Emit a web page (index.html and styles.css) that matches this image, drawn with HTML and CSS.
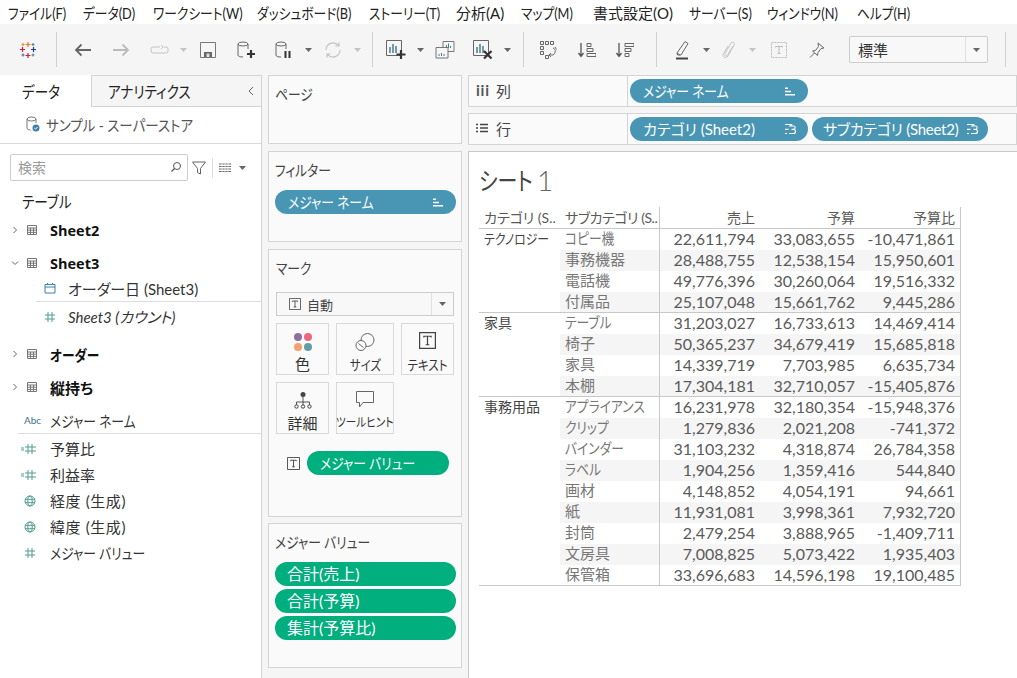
FILE: index.html
```html
<!DOCTYPE html>
<html lang="ja">
<head>
    <title>Tableau</title>
    <link rel="stylesheet" href="styles.css">
</head>
<body>
    <svg class="defs" width="0" height="0">
        <symbol id="tbl" viewBox="0 0 12 12"><path d="M1.500 1.500h9v9h-9zM1.500 4h9M1.500 6.200h9M1.500 8.400h9M4.500 4v6.500M7.500 4v6.500" fill="none" stroke="#777" stroke-width="1"/></symbol>
        <symbol id="hash" viewBox="0 0 12 12"><path d="M4 1v10M8 1v10M1 4h10M1 8h10" fill="none" stroke="#4f9e8f" stroke-width="1"/></symbol>
        <symbol id="calc" viewBox="0 0 16 12"><path d="M7 1v10M11 1v10M4 4h11M4 8h11" fill="none" stroke="#4f9e8f" stroke-width="1"/><path d="M0 5h3M0 7h3" stroke="#4f9e8f" stroke-width="1"/></symbol>
        <symbol id="globe" viewBox="0 0 12 12"><g fill="none" stroke="#4f9e8f" stroke-width="1"><circle cx="6" cy="6" r="5"/><ellipse cx="6" cy="6" rx="2.200" ry="5"/><path d="M1 4.300h10M1 7.700h10"/></g></symbol>
        <symbol id="chev" viewBox="0 0 8 8"><path d="M2.500 1l3 3-3 3" fill="none" stroke="#666" stroke-width="1"/></symbol>
        <symbol id="caret" viewBox="0 0 7 4"><path d="M0 0h7L3.500 4z"/></symbol>
        <symbol id="sort" viewBox="0 0 12 10"><path d="M1 1h3v1.500H1zM1 4.200h6v1.500H1zM1 7.500h10V9H1z" fill="#fff"/></symbol>
        <symbol id="hier" viewBox="0 0 14 12"><path d="M1 1.500h6.500l-1.500 1.500H9.500a1.700 1.700 0 0 1 0 3.400H7.500M5 10.500h4.500a2 2 0 0 0 0-4M1 6.400h3.500M1 10.500h2" fill="none" stroke="#fff" stroke-width="1.100"/></symbol>
        <symbol id="ttype" viewBox="0 0 14 14"><path d="M.5.500h13v13H.500z" fill="none" stroke="#444"/><path d="M4 4.500V3.500h6v1M7 3.500v7M5.500 10.500h3" fill="none" stroke="#444"/></symbol>
    </svg>

    <div class="menu-bar">
        <span class="menu-item cond">ファイル(F)</span>
        <span class="menu-item cond">データ(D)</span>
        <span class="menu-item cond">ワークシート(W)</span>
        <span class="menu-item cond">ダッシュボード(B)</span>
        <span class="menu-item cond">ストーリー(T)</span>
        <span class="menu-item">分析(A)</span>
        <span class="menu-item cond">マップ(M)</span>
        <span class="menu-item">書式設定(O)</span>
        <span class="menu-item cond">サーバー(S)</span>
        <span class="menu-item cond">ウィンドウ(N)</span>
        <span class="menu-item cond">ヘルプ(H)</span>
    </div>

    <div class="toolbar">
        <div class="tool-group group-logo">
            <svg width="18" height="18" viewBox="0 0 18 18" fill="none" stroke-width="1.200">
                <path d="M9 1v5M6.500 3.500h5" stroke="#e8762d"/>
                <path d="M9 12v5M6.500 14.500h5" stroke="#c72037"/>
                <path d="M3.500 6v5M1 8.500h5" stroke="#c72037"/>
                <path d="M14.500 6v5M12 8.500h5" stroke="#1f447a"/>
                <path d="M4 2v3M2.500 3.500h3" stroke="#eb912b"/>
                <path d="M14 2v3M12.500 3.500h3" stroke="#5b879b"/>
                <path d="M4 12.500v3M2.500 14h3" stroke="#5c6692"/>
                <path d="M14 12.500v3M12.500 14h3" stroke="#59879b"/>
            </svg>
        </div>
        <div class="tool-group group-history">
            <div class="tool"><svg width="18" height="14" viewBox="0 0 18 14"><path d="M17 7H2M7.500 1.500L2 7l5.500 5.500" fill="none" stroke="#666" stroke-width="1.800"/></svg></div>
            <div class="tool"><svg width="18" height="14" viewBox="0 0 18 14"><path d="M1 7h15M10.500 1.500L16 7l-5.500 5.500" fill="none" stroke="#bbb" stroke-width="1.800"/></svg></div>
            <div class="tool"><svg width="19" height="12" viewBox="0 0 19 12"><path d="M10 3H3a2 2 0 0 0-2 2v2a2 2 0 0 0 2 2h13a2 2 0 0 0 2-2V5a2 2 0 0 0-2-2h-2M11 1l2 2-2 2" fill="none" stroke="#c4c4c4"/></svg></div>
            <svg class="caret off"><use href="#caret"/></svg>
            <div class="tool"><svg width="16" height="16" viewBox="0 0 16 16"><path d="M.5.500h15v15H.500z" fill="none" stroke="#777"/><path d="M4 10h8v5H4z" fill="#666"/><path d="M6.500 11.500h3V15h-3z" fill="#ddd"/></svg></div>
            <div class="tool"><svg width="20" height="20" viewBox="0 0 20 20"><g fill="none" stroke="#666"><ellipse cx="7" cy="4" rx="5" ry="2"/><path d="M2 4v11c0 1.500 2 2 5 2M12 4v5"/></g><path d="M15 10v8M11 14h8" stroke="#333" stroke-width="2.200"/></svg></div>
            <div class="tool"><svg width="20" height="20" viewBox="0 0 20 20"><g fill="none" stroke="#666"><ellipse cx="7" cy="4" rx="5" ry="2"/><path d="M2 4v11c0 1.500 2 2 5 2M12 4v5"/></g><path d="M11.500 11v7M15.500 11v7" stroke="#333" stroke-width="2"/></svg></div>
            <svg class="caret"><use href="#caret"/></svg>
            <div class="tool"><svg width="18" height="18" viewBox="0 0 18 18"><path d="M2 9a7 7 0 0 1 12.500-4.300M16 9a7 7 0 0 1-12.500 4.300M15 1.500v3.500h-3.500M3 16.500V13h3.500" fill="none" stroke="#c4c4c4" stroke-width="1.200"/></svg></div>
            <svg class="caret off"><use href="#caret"/></svg>
        </div>
        <div class="tool-group group-sheet">
            <div class="tool"><svg width="20" height="20" viewBox="0 0 20 20"><path d="M.5.500h15v15H.500z" fill="none" stroke="#666"/><path d="M4 7v6M7 4v9M10 6v7" stroke="#4a7c8c" stroke-width="1.500"/><path d="M15 10v9M10.500 14.500h9" stroke="#333" stroke-width="2.200"/></svg></div>
            <svg class="caret"><use href="#caret"/></svg>
            <div class="tool"><svg width="20" height="18" viewBox="0 0 20 18"><path d="M8 6.500V.5h11v10h-6M1 6.500h12v10.500H1z" fill="#f5f5f5" stroke="#777"/><path d="M11.500 7V4M13.500 7V2.500M15.500 7V5M4 15v-2M6.500 15v-3M9 15v-2" stroke="#4a7c8c"/></svg></div>
            <div class="tool"><svg width="20" height="20" viewBox="0 0 20 20"><path d="M.5.500h15v15H.500z" fill="none" stroke="#666"/><path d="M4 7v6M7 4v9M10 6v7" stroke="#4a7c8c" stroke-width="1.500"/><path d="M11 11l7.500 7.500M18.500 11L11 18.500" stroke="#333" stroke-width="2.200"/></svg></div>
            <svg class="caret"><use href="#caret"/></svg>
        </div>
        <div class="tool-group group-sort">
            <div class="tool"><svg width="18" height="18" viewBox="0 0 18 18"><g fill="none" stroke="#666"><path d="M.5.500h3v3h-3zM5.500.500h3v3h-3zM10.500.500h3v3h-3zM.5 5.500h3v3h-3zM.5 10.500h3v3h-3zM5.500 14.500h3v3h-3z"/><path d="M13 7c3 1 3 5 0 7H9M15 6l1.500 2.500M11 12l-2 2 2 2"/></g></svg></div>
            <div class="tool"><svg width="18" height="16" viewBox="0 0 18 16"><path d="M3 1v13M.5 11L3 14.500 5.500 11" fill="none" stroke="#555" stroke-width="1.300"/><path d="M9 1.500h4v3H9zM9 6.500h6v3H9zM9 11.500h9v3H9z" fill="none" stroke="#666"/></svg></div>
            <div class="tool"><svg width="18" height="16" viewBox="0 0 18 16"><path d="M3 1v13M.5 11L3 14.500 5.500 11" fill="none" stroke="#555" stroke-width="1.300"/><path d="M9 1.500h9v3H9zM9 6.500h6v3H9zM9 11.500h4v3H9z" fill="none" stroke="#666"/></svg></div>
        </div>
        <div class="tool-group group-format">
            <div class="tool"><svg width="14" height="20" viewBox="0 0 14 20"><path d="M1 13L9 1.500l3 2L5 15H1.500z" fill="none" stroke="#666"/><path d="M1 13l3 2" stroke="#666"/><path d="M0 18.500h12" stroke="#444" stroke-width="2"/></svg></div>
            <svg class="caret narrow"><use href="#caret"/></svg>
            <div class="tool"><svg width="14" height="20" viewBox="0 0 14 20"><path d="M11 6l-5.500 9c-1 1.700-3.500.5-2.500-1.500L9 3c1.200-2 4.500-.5 3 2L6 16c-2 3-6.500 1-4.500-2.500L6 6" fill="none" stroke="#c4c4c4"/></svg></div>
            <svg class="caret narrow off"><use href="#caret"/></svg>
            <div class="tool tool-label"><svg width="16" height="16" viewBox="0 0 16 16"><path d="M.5.500h15v15H.500z" fill="none" stroke="#bbb" stroke-dasharray="2 1"/><path d="M4.500 5.500v-1h7v1M8 4.500v7M6.500 11.500h3" fill="none" stroke="#bbb"/></svg></div>
            <div class="tool"><svg width="16" height="16" viewBox="0 0 16 16"><path d="M9 1l6 5-3 .5-3 4-.5 3L3.500 9l3-.5 3-4zM5.500 11L1 15.500" fill="none" stroke="#666"/></svg></div>
            <div class="view-select">
                <span class="view-select-text">標準</span>
                <span class="view-select-btn"><svg class="caret"><use href="#caret"/></svg></span>
            </div>
        </div>
        <div class="tool-group group-end"></div>
    </div>

    <div class="main">
        <div class="data-pane">
            <div class="tabs">
                <div class="tab tab-active"><span class="cond">データ</span></div>
                <div class="tab tab-other"><span class="cond">アナリティクス</span><svg class="tab-collapse" width="8" height="10" viewBox="0 0 8 10"><path d="M6 1L2 5l4 4" fill="none" stroke="#666"/></svg></div>
            </div>
            <div class="source">
                <svg width="14" height="16" viewBox="0 0 14 16"><g fill="none" stroke="#777"><ellipse cx="5.500" cy="3" rx="4.500" ry="2"/><path d="M1 3v9c0 1.300 1.500 2 3.500 2M10 3v4"/></g><circle cx="10" cy="12" r="3.500" fill="#3f7fa8"/><path d="M8.300 12l1.200 1.200 2-2.200" fill="none" stroke="#fff"/></svg>
                <span class="cond cond-wide">サンプル - スーパーストア</span>
            </div>
            <div class="search-row">
                <div class="search-box">
                    <span class="search-text">検索</span>
                    <svg width="12" height="12" viewBox="0 0 12 12"><circle cx="7" cy="5" r="3.500" fill="none" stroke="#555"/><path d="M4.500 7.500L1.500 10.500" stroke="#555" stroke-width="1.200"/></svg>
                </div>
                <svg class="search-filter" width="14" height="14" viewBox="0 0 14 14"><path d="M.5 1h13L8.500 7.500V13l-3-1.500v-4z" fill="none" stroke="#666"/></svg>
                <span class="search-divider"></span>
                <svg class="search-grid" width="12" height="10" viewBox="0 0 12 10"><path d="M0 1h12M0 3.500h12M0 6h12M0 8.500h12" stroke="#666"/><path d="M3 0v10M6 0v10M9 0v10" stroke="#f8f8f8" stroke-width=".8"/></svg>
                <svg class="caret"><use href="#caret"/></svg>
            </div>
            <div class="tables-title"><span class="cond">テーブル</span></div>
            <div class="field table-row">
                <svg class="chev"><use href="#chev"/></svg>
                <svg class="field-icon"><use href="#tbl"/></svg>
                <span class="sheet-name">Sheet2</span>
            </div>
            <div class="field table-row">
                <svg class="chev chev-open"><use href="#chev"/></svg>
                <svg class="field-icon"><use href="#tbl"/></svg>
                <span class="sheet-name">Sheet3</span>
            </div>
            <div class="field sub-field sub-date">
                <svg class="field-icon" viewBox="0 0 12 12"><path d="M1 2.500h10v8.500H1zM1 5h10M3.500 1v2M8.500 1v2" fill="none" stroke="#3f7fa8"/></svg>
                <span>オーダー日 (Sheet3)</span>
            </div>
            <div class="field sub-field sub-count">
                <svg class="field-icon"><use href="#hash"/></svg>
                <em>Sheet3 (カウント)</em>
            </div>
            <div class="field table-row">
                <svg class="chev"><use href="#chev"/></svg>
                <svg class="field-icon"><use href="#tbl"/></svg>
                <span class="cond">オーダー</span>
            </div>
            <div class="field table-row table-last">
                <svg class="chev"><use href="#chev"/></svg>
                <svg class="field-icon"><use href="#tbl"/></svg>
                <span>縦持ち</span>
            </div>
            <div class="field measure-names">
                <span class="abc">Abc</span>
                <span class="cond">メジャー ネーム</span>
            </div>
            <div class="field">
                <svg class="field-icon calc"><use href="#calc"/></svg>
                <span>予算比</span>
            </div>
            <div class="field">
                <svg class="field-icon calc"><use href="#calc"/></svg>
                <span>利益率</span>
            </div>
            <div class="field">
                <svg class="field-icon"><use href="#globe"/></svg>
                <span class="spaced">経度 (生成)</span>
            </div>
            <div class="field">
                <svg class="field-icon"><use href="#globe"/></svg>
                <span class="spaced">緯度 (生成)</span>
            </div>
            <div class="field">
                <svg class="field-icon"><use href="#hash"/></svg>
                <span class="cond">メジャー バリュー</span>
            </div>
        </div>

        <div class="cards">
            <div class="card card-pages">
                <div class="card-title"><span class="cond">ページ</span></div>
            </div>
            <div class="card card-filters">
                <div class="card-title"><span class="cond">フィルター</span></div>
                <div class="pill pill-blue"><span class="cond">メジャー ネーム</span><svg class="pill-icon"><use href="#sort"/></svg></div>
            </div>
            <div class="card card-marks">
                <div class="card-title"><span class="cond">マーク</span></div>
                <div class="marks-select">
                    <svg width="12" height="12"><use href="#ttype"/></svg>
                    <span class="marks-select-text">自動</span>
                    <span class="marks-select-btn"><svg class="caret"><use href="#caret"/></svg></span>
                </div>
                <div class="marks-grid">
                    <div class="mark-btn">
                        <svg class="mark-icon" width="20" height="20" viewBox="0 0 20 20"><circle cx="5" cy="5" r="4" fill="#8f6f9f"/><circle cx="15" cy="5" r="4" fill="#e8687f"/><circle cx="5" cy="15" r="4" fill="#f2a272"/><circle cx="15" cy="15" r="4" fill="#5f9ea6"/></svg>
                        <span>色</span>
                    </div>
                    <div class="mark-btn">
                        <svg class="mark-icon" width="20" height="20" viewBox="0 0 20 20"><circle cx="12.500" cy="8" r="6.500" fill="none" stroke="#666"/><circle cx="6" cy="13.500" r="5" fill="#fafafa" stroke="#666"/><path d="M3.500 11.500l5 4" stroke="#666"/></svg>
                        <span class="cond">サイズ</span>
                    </div>
                    <div class="mark-btn">
                        <svg class="mark-icon" width="17" height="17"><use href="#ttype"/></svg>
                        <span class="cond">テキスト</span>
                    </div>
                    <div class="mark-btn">
                        <svg class="mark-icon" width="18" height="18" viewBox="0 0 18 18"><circle cx="9" cy="3.500" r="2.500" fill="#444"/><path d="M9 6v5M2.500 14v-3h13v3M9 11v3" fill="none" stroke="#555"/><circle cx="2.500" cy="15.500" r="1.700" fill="none" stroke="#444"/><circle cx="9" cy="15.500" r="1.700" fill="none" stroke="#444"/><circle cx="15.500" cy="15.500" r="1.700" fill="none" stroke="#444"/></svg>
                        <span>詳細</span>
                    </div>
                    <div class="mark-btn">
                        <svg class="mark-icon" width="18" height="17" viewBox="0 0 18 17"><path d="M.5.500h17v11H7l-3.500 4.500v-4.500h-3z" fill="none" stroke="#666"/></svg>
                        <span class="cond mark-small">ツールヒント</span>
                    </div>
                </div>
                <div class="mark-pill-row">
                    <svg width="13" height="13"><use href="#ttype"/></svg>
                    <div class="pill pill-green"><span class="cond">メジャー バリュー</span></div>
                </div>
            </div>
            <div class="card card-values">
                <div class="card-title"><span class="cond">メジャー バリュー</span></div>
                <div class="pill pill-green pill-calc">合計(売上)</div>
                <div class="pill pill-green pill-calc">合計(予算)</div>
                <div class="pill pill-green pill-calc">集計(予算比)</div>
            </div>
        </div>

        <div class="work">
            <div class="shelf">
                <div class="shelf-label"><span class="shelf-glyph">iii</span>列</div>
                <div class="shelf-pills">
                    <div class="pill pill-blue pill-shelf"><span class="cond">メジャー ネーム</span><svg class="pill-icon"><use href="#sort"/></svg></div>
                </div>
            </div>
            <div class="shelf shelf-rows">
                <div class="shelf-label">
                    <span class="shelf-glyph"><svg width="12" height="10" viewBox="0 0 12 10"><path d="M0 1.500h2M4 1.500h8M0 5h2M4 5h8M0 8.500h2M4 8.500h8" stroke="#444" stroke-width="1.300"/></svg></span>行
                </div>
                <div class="shelf-pills">
                    <div class="pill pill-blue pill-shelf pill-hier">カテゴリ (Sheet2)<svg class="pill-icon icon-hier"><use href="#hier"/></svg></div>
                    <div class="pill pill-blue pill-shelf pill-sub">サブカテゴリ (Sheet2)<svg class="pill-icon icon-hier"><use href="#hier"/></svg></div>
                </div>
            </div>
            <div class="view">
                <h1 class="sheet-title"><span class="cond cond-title">シート</span><span class="title-num">1</span></h1>
                <table class="crosstab">
                    <colgroup>
                        <col class="col-cat"><col class="col-sub"><col class="col-num"><col class="col-num"><col class="col-num">
                    </colgroup>
                    <thead>
                        <tr><th>カテゴリ (S..</th><th class="th-sub">サブカテゴリ (S..</th><th class="num">売上</th><th class="num">予算</th><th class="num">予算比</th></tr>
                    </thead>
                    <tbody class="group">
                        <tr><td class="cat" rowspan="4"><span class="cond">テクノロジー</span></td><td class="sub"><span class="cond">コピー機</span></td><td class="num">22,611,794</td><td class="num">33,083,655</td><td class="num">-10,471,861</td></tr>
                        <tr class="alt"><td class="sub">事務機器</td><td class="num">28,488,755</td><td class="num">12,538,154</td><td class="num">15,950,601</td></tr>
                        <tr><td class="sub">電話機</td><td class="num">49,776,396</td><td class="num">30,260,064</td><td class="num">19,516,332</td></tr>
                        <tr class="alt"><td class="sub">付属品</td><td class="num">25,107,048</td><td class="num">15,661,762</td><td class="num">9,445,286</td></tr>
                    </tbody>
                    <tbody class="group">
                        <tr><td class="cat" rowspan="4">家具</td><td class="sub"><span class="cond">テーブル</span></td><td class="num">31,203,027</td><td class="num">16,733,613</td><td class="num">14,469,414</td></tr>
                        <tr class="alt"><td class="sub">椅子</td><td class="num">50,365,237</td><td class="num">34,679,419</td><td class="num">15,685,818</td></tr>
                        <tr><td class="sub">家具</td><td class="num">14,339,719</td><td class="num">7,703,985</td><td class="num">6,635,734</td></tr>
                        <tr class="alt"><td class="sub">本棚</td><td class="num">17,304,181</td><td class="num">32,710,057</td><td class="num">-15,405,876</td></tr>
                    </tbody>
                    <tbody class="group">
                        <tr><td class="cat" rowspan="9">事務用品</td><td class="sub"><span class="cond">アプライアンス</span></td><td class="num">16,231,978</td><td class="num">32,180,354</td><td class="num">-15,948,376</td></tr>
                        <tr class="alt"><td class="sub"><span class="cond">クリップ</span></td><td class="num">1,279,836</td><td class="num">2,021,208</td><td class="num">-741,372</td></tr>
                        <tr><td class="sub"><span class="cond">バインダー</span></td><td class="num">31,103,232</td><td class="num">4,318,874</td><td class="num">26,784,358</td></tr>
                        <tr class="alt"><td class="sub"><span class="cond">ラベル</span></td><td class="num">1,904,256</td><td class="num">1,359,416</td><td class="num">544,840</td></tr>
                        <tr><td class="sub">画材</td><td class="num">4,148,852</td><td class="num">4,054,191</td><td class="num">94,661</td></tr>
                        <tr class="alt"><td class="sub">紙</td><td class="num">11,931,081</td><td class="num">3,998,361</td><td class="num">7,932,720</td></tr>
                        <tr><td class="sub">封筒</td><td class="num">2,479,254</td><td class="num">3,888,965</td><td class="num">-1,409,711</td></tr>
                        <tr class="alt"><td class="sub">文房具</td><td class="num">7,008,825</td><td class="num">5,073,422</td><td class="num">1,935,403</td></tr>
                        <tr><td class="sub">保管箱</td><td class="num">33,696,683</td><td class="num">14,596,198</td><td class="num">19,100,485</td></tr>
                    </tbody>
                </table>
            </div>
        </div>
    </div>
</body>
</html>
```

FILE: styles.css
```css
* {
    box-sizing: border-box;
}
body {
    margin: 0;
    width: 1017px;
    height: 678px;
    overflow: hidden;
    background: #fff;
    color: #333;
    font-family: Lato, "Noto Sans CJK JP", sans-serif;
    font-size: 15px;
    font-feature-settings: "palt";
}
.defs {
    position: absolute;
}
/* katakana in the original UI font is much narrower than in Noto */
.cond {
    display: inline-block;
    white-space: nowrap;
    transform: scaleX(.85);
    transform-origin: 0 50%;
}
.cond-wide {
    transform: scaleX(.9);
}
.cond-title {
    transform: scaleX(.8);
}

/* menu */
.menu-bar {
    display: grid;
    grid-template-columns: 75px 70px 104px 112px 87px 65px 72px 96px 78px 90px auto;
    height: 24px;
    padding-left: 8px;
    align-items: center;
    background: #fff;
    color: #222;
    white-space: nowrap;
}

/* toolbar */
.toolbar {
    display: flex;
    height: 51px;
    background: #f5f5f5;
    align-items: center;
}
.tool-group {
    display: flex;
    align-items: center;
    height: 35px;
    border-left: 1px solid #d0d0d0;
}
.group-logo {
    width: 56px;
    border-left: none;
    justify-content: center;
}
.group-history {
    width: 316px;
    padding-left: 7px;
}
.group-sheet {
    width: 151px;
    padding-left: 4px;
}
.group-sort {
    width: 133px;
    padding-left: 6px;
}
.group-format {
    width: 349px;
    padding-left: 7px;
}
.group-end {
    flex: 1;
}
.tool {
    width: 38px;
    display: flex;
    justify-content: center;
    align-items: center;
}
.tool-label {
    margin-left: 4px;
}
.caret {
    width: 7px;
    height: 4px;
    margin: 0 2px;
    fill: #666;
    flex: none;
}
.caret.off {
    fill: #c4c4c4;
}
.caret.narrow {
    margin: 0 .5px;
}
.view-select {
    display: flex;
    align-items: center;
    width: 139px;
    height: 27px;
    margin-left: 13px;
    border: 1px solid #ccc;
    border-radius: 2px;
    background: #f8f8f8;
}
.view-select-text {
    flex: 1;
    padding-left: 8px;
}
.view-select-btn {
    width: 22px;
    height: 100%;
    display: flex;
    align-items: center;
    justify-content: center;
    border-left: 1px solid #e0e0e0;
}
.view-select-btn .caret {
    margin: 0;
}

/* main layout */
.main {
    display: flex;
    height: 603px;
    background: #f5f5f5;
}
.data-pane {
    width: 262px;
    background: #fff;
    border-right: 1px solid #d4d4d4;
    flex: none;
}
.tabs {
    display: flex;
    height: 32px;
    font-size: 16px;
}
.tab {
    display: flex;
    align-items: center;
}
.tab-active {
    width: 91px;
    padding-left: 22px;
    color: #222;
}
.tab-other {
    flex: 1;
    padding-left: 16px;
    justify-content: space-between;
    padding-right: 6px;
    background: #f5f5f5;
    border-left: 1px solid #d4d4d4;
    border-bottom: 1px solid #d4d4d4;
    border-top: 1px solid #d4d4d4;
    color: #222;
}
.source {
    display: flex;
    align-items: center;
    gap: 6px;
    height: 37px;
    padding-left: 26px;
    padding-bottom: 2px;
    border-bottom: 1px solid #d9d9d9;
    color: #555;
}
.search-row {
    display: flex;
    align-items: center;
    height: 27px;
    margin: 10px 0 9px 10px;
}
.search-box {
    display: flex;
    align-items: center;
    justify-content: space-between;
    width: 178px;
    height: 27px;
    padding: 0 5px 2px 7px;
    border: 1px solid #ccc;
    border-radius: 2px;
}
.search-text {
    color: #999;
    font-size: 14px;
}
.search-filter {
    margin-left: 4px;
}
.search-divider {
    width: 1px;
    height: 20px;
    margin: 0 6px;
    background: #ddd;
}
.search-grid {
    margin-right: 6px;
}
.tables-title {
    height: 22px;
    margin-bottom: 5px;
    padding-left: 22px;
    line-height: 23px;
    font-size: 16px;
    color: #222;
}
.field {
    display: flex;
    align-items: center;
    height: 26px;
    padding-left: 24px;
    padding-bottom: 1px;
    color: #333;
    white-space: nowrap;
}
.field-icon {
    width: 12px;
    height: 12px;
    margin-right: 14px;
    flex: none;
}
.field-icon.calc {
    width: 16px;
    margin-left: -3px;
    margin-right: 13px;
}
.spaced {
    letter-spacing: .6px;
}
.table-row {
    padding-left: 11px;
    padding-bottom: 0;
    margin-bottom: 7px;
    font-weight: 700;
    color: #111;
}
.table-row .field-icon {
    margin-right: 12px;
}
.sheet-name {
    font-family: "Open Sans", sans-serif;
    font-size: 14.500px;
}
.chev {
    width: 8px;
    height: 8px;
    margin-right: 7px;
}
.chev-open {
    transform: rotate(90deg);
}
.sub-field {
    padding-left: 44px;
}
.sub-field .field-icon {
    margin-right: 12px;
}
.sub-date {
    margin-top: -7px;
    margin-left: 36px;
    padding-left: 8px;
    border-bottom: 1px solid #ddd;
}
.sub-count {
    margin-top: 2px;
    margin-bottom: 11px;
}
.table-last {
    margin-bottom: 8px;
}
.measure-names {
    margin-left: 18px;
    padding-left: 6px;
    border-bottom: 1px solid #ddd;
    margin-bottom: 2px;
}
.abc {
    width: 26px;
    font-size: 10px;
    color: #3f6f8f;
}

/* middle cards */
.cards {
    display: flex;
    flex-direction: column;
    gap: 7px;
    width: 194px;
    margin-left: 6px;
    flex: none;
}
.card {
    padding: 8px 5px 0 6px;
    background: #fafafa;
    border: 1px solid #d4d4d4;
    color: #444;
}
.card-title {
    height: 22px;
    line-height: 20px;
    margin-bottom: 8px;
}
.card-pages {
    height: 69px;
}
.card-filters {
    height: 91px;
}
.card-marks {
    height: 268px;
    padding: 8px 7px 0;
}
.card-marks .card-title {
    margin-bottom: 12px;
}
.card-values {
    height: 145px;
    margin-top: -1px;
}
.pill {
    display: flex;
    align-items: center;
    justify-content: space-between;
    height: 24px;
    padding: 0 12px 2px 13px;
    border-radius: 12px;
    color: #fff;
    white-space: nowrap;
}
.pill-blue {
    background: #4996b4;
}
.pill-green {
    background: #00ae7e;
    margin-bottom: 3px;
}
.pill-calc {
    padding-left: 12px;
    font-size: 16px;
}
.pill-icon {
    width: 12px;
    height: 11px;
    flex: none;
    margin-top: 2px;
}
.icon-hier {
    width: 14px;
    height: 12px;
}
.pill-shelf {
    width: 178px;
}
.pill-hier {
    padding-right: 10px;
}
.pill-sub {
    width: 176px;
    padding-left: 11px;
    padding-right: 8px;
    letter-spacing: -.25px;
}

/* marks */
.marks-select {
    display: flex;
    align-items: center;
    gap: 6px;
    height: 24px;
    padding-left: 12px;
    border: 1px solid #ccc;
    background: #f8f8f8;
    font-size: 13px;
}
.marks-select-text {
    flex: 1;
}
.marks-select-btn {
    width: 22px;
    height: 100%;
    display: flex;
    align-items: center;
    justify-content: center;
    border-left: 1px solid #e0e0e0;
}
.marks-select-btn .caret {
    margin: 0;
}
.marks-grid {
    display: grid;
    grid-template-columns: 53px 58px 53px;
    grid-auto-rows: 52px;
    gap: 7px;
    margin-top: 7px;
}
.mark-btn {
    display: flex;
    flex-direction: column;
    align-items: center;
    justify-content: flex-end;
    padding-bottom: 0;
    border: 1px solid #d9d9d9;
    color: #333;
    position: relative;
}
.mark-btn .cond {
    font-size: 13.500px;
    transform-origin: 50% 50%;
}
.mark-icon {
    position: absolute;
    top: 8px;
}
.mark-btn .mark-small {
    font-size: 12.500px;
    line-height: 21px;
}
.mark-pill-row {
    display: flex;
    align-items: center;
    gap: 7px;
    margin: 17px 5px 0 11px;
}
.mark-pill-row .pill {
    flex: 1;
    margin-bottom: 0;
}

/* shelves */
.work {
    flex: 1;
    margin-left: 6px;
    display: flex;
    flex-direction: column;
}
.shelf {
    display: flex;
    height: 32px;
    background: #fafafa;
    border: 1px solid #d4d4d4;
}
.shelf-rows {
    margin-top: 6px;
}
.shelf-label {
    width: 159px;
    display: flex;
    align-items: center;
    padding-left: 7px;
    padding-bottom: 2px;
    border-right: 1px solid #d4d4d4;
    color: #444;
}
.shelf-glyph {
    display: flex;
    align-items: center;
    width: 20px;
    font-weight: 700;
    font-size: 15px;
    letter-spacing: .8px;
    color: #555;
}
.shelf-pills {
    display: flex;
    align-items: center;
    gap: 4px;
    padding-left: 2px;
}

/* view */
.view {
    flex: 1;
    margin-top: 6px;
    padding: 13px 0 0 10px;
    background: #fff;
    border-top: 1px solid #c8c8c8;
    border-left: 1px solid #c8c8c8;
}
.sheet-title {
    display: flex;
    align-items: center;
    margin: 0 0 11px;
    height: 31px;
    line-height: 31px;
    font-size: 25px;
    font-weight: 400;
    color: #444;
}
.title-num {
    margin-left: -9px;
    font-size: 28px;
    font-weight: 300;
    color: #666;
}
.crosstab {
    table-layout: fixed;
    width: 480px;
    border-collapse: separate;
    border-spacing: 0;
    font-size: 16px;
    color: #5a5a5a;
    border-right: 1px solid #c8c8c8;
}
.col-cat {
    width: 81px;
}
.col-sub {
    width: 100px;
}
.col-num {
    width: 100px;
}
.crosstab th {
    height: 21px;
    padding: 0 0 1px 5px;
    font-size: 14px;
    font-weight: 400;
    text-align: left;
    white-space: nowrap;
    overflow: hidden;
    border-bottom: 1px solid #c8c8c8;
}
.crosstab th.th-sub {
    letter-spacing: -.45px;
}
.crosstab td {
    height: 21px;
    padding: 0 0 2px 5px;
    line-height: 19px;
    white-space: nowrap;
}
.crosstab .num {
    padding: 0 5px 2px 0;
    text-align: right;
}
.crosstab th.num {
    padding: 0 5px 1px 0;
    text-align: right;
}
.crosstab .th-sub,
.crosstab .sub {
    border-right: 1px solid #c8c8c8;
}
.crosstab .cat {
    vertical-align: top;
    font-size: 14px;
    color: #444;
    border-bottom: 1px solid #c8c8c8;
}
.crosstab .sub {
    font-size: 15px;
    color: #777;
}
.group tr:last-child td {
    padding-bottom: 1px;
    border-bottom: 1px solid #c8c8c8;
}
.alt td {
    background: #f5f5f5;
}
```
